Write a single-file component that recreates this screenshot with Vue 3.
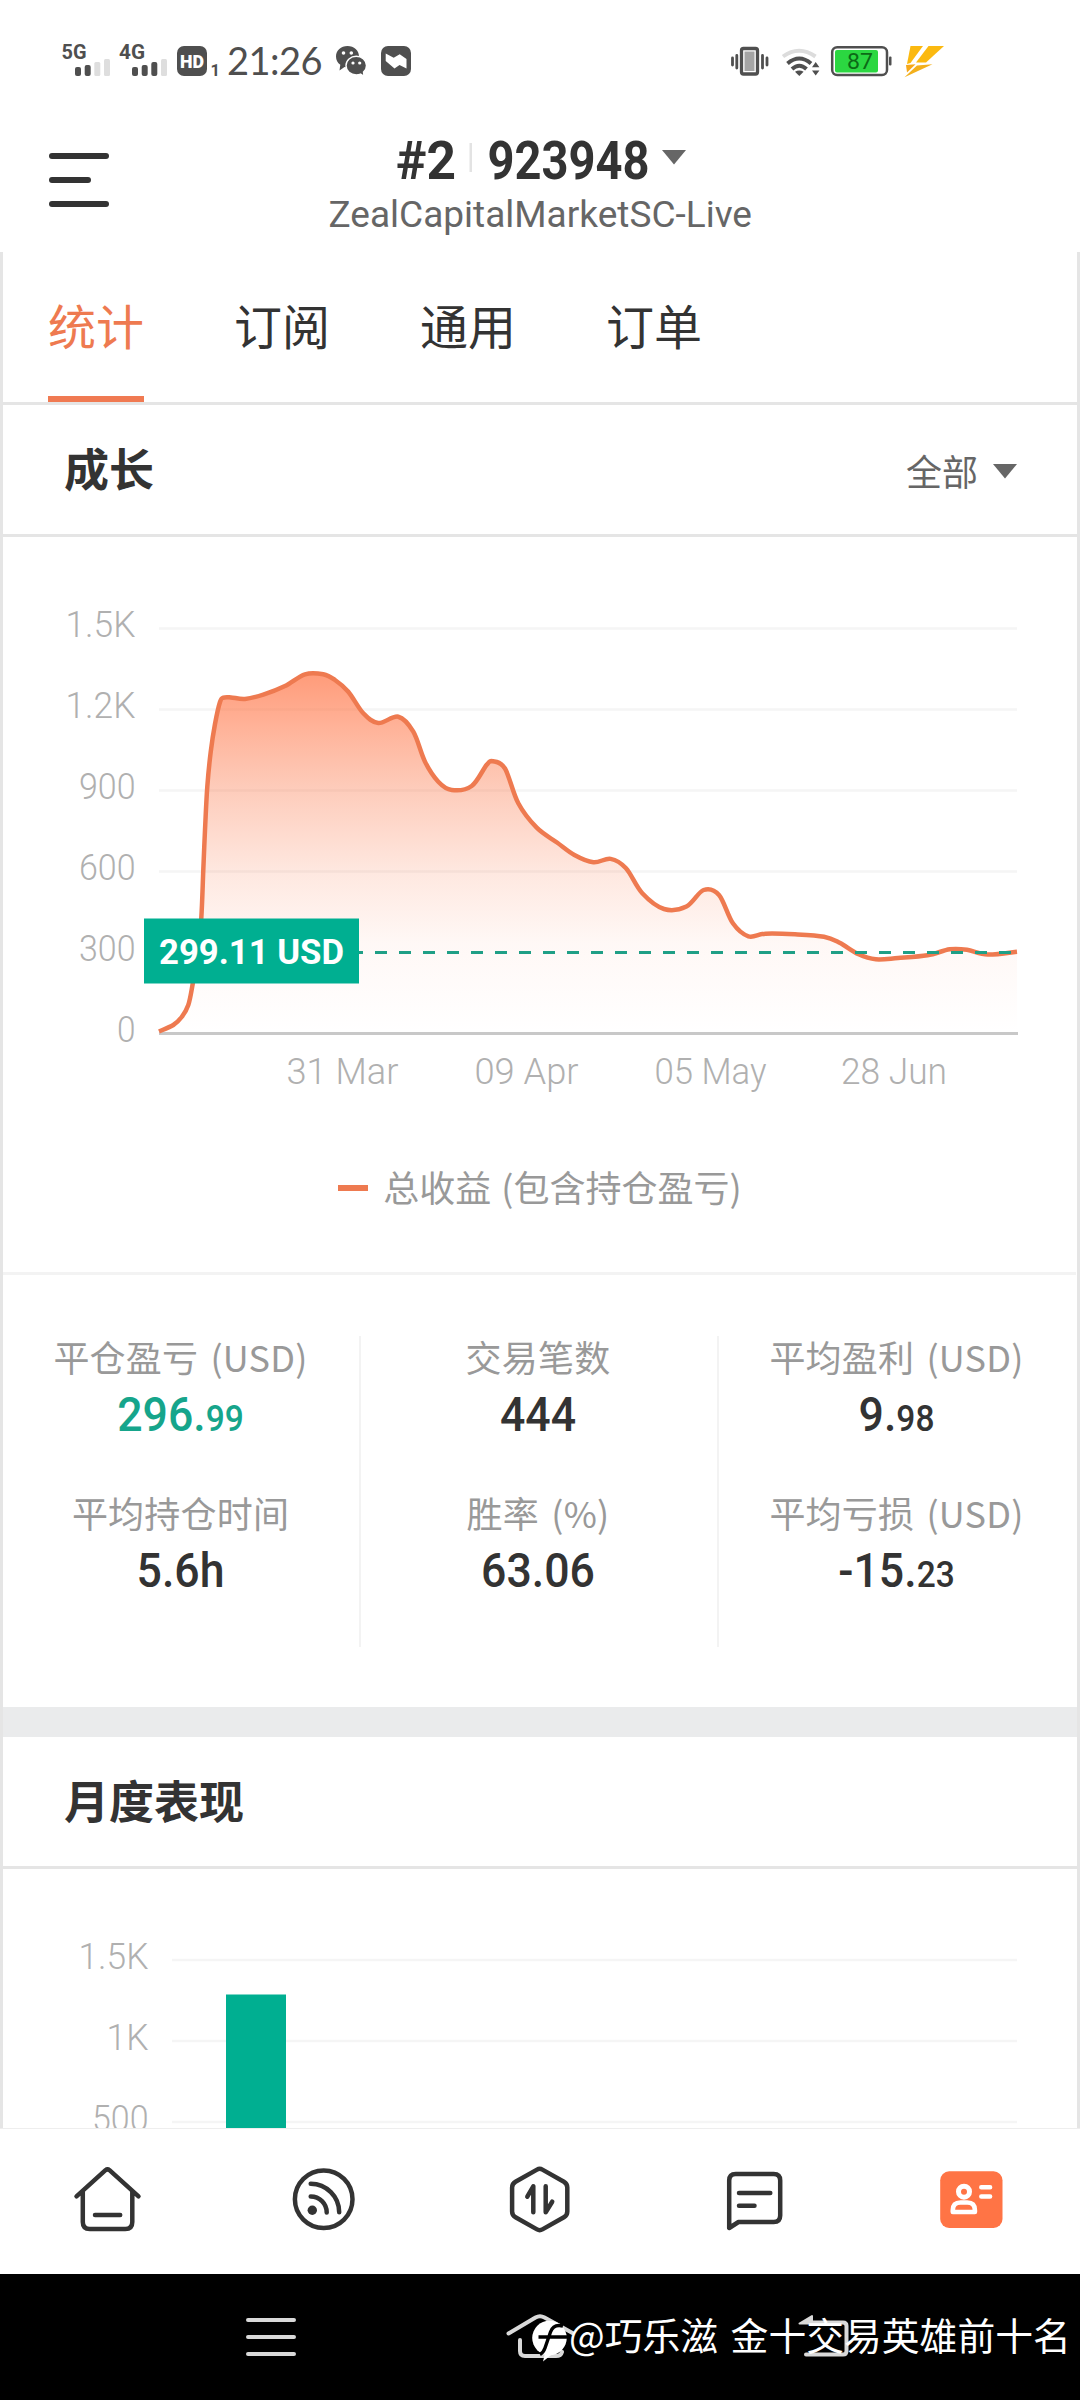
<script setup>
const tabs = ['统计', '订阅', '通用', '订单']

const growthTicks = [
  { label: '1.5K', y: 628.5, w: 70 },
  { label: '1.2K', y: 709.5, w: 70 },
  { label: '900', y: 790.5, w: 56.5 },
  { label: '600', y: 871.5, w: 56.5 },
  { label: '300', y: 952.5, w: 56.5, hidden: true },
  { label: '0', y: 1033.5, w: 18.5, hidden: true }
]
const dates = [
  { label: '31 Mar', x: 342.5, w: 112 },
  { label: '09 Apr', x: 526.5, w: 104 },
  { label: '05 May', x: 710.5, w: 112 },
  { label: '28 Jun', x: 894, w: 106 }
]
const monthTicks = [
  { label: '1.5K', y: 1960, w: 70 },
  { label: '1K', y: 2041, w: 42 },
  { label: '500', y: 2122, w: 56.5 }
]

const points = [
  [159, 1031.5], [173.3, 1025], [181.7, 1017], [188.3, 1005], [192.5, 985], [198, 950], [201.3, 918],
  [203.3, 870], [205, 830], [207.3, 786.7], [210.7, 752], [215, 724], [220, 702], [223.6, 697.6],
  [231, 697.4], [245, 698.9], [263.3, 694.6], [285, 686], [305, 674.3], [323.3, 674.3], [335, 680],
  [348.3, 691.7], [363.3, 713.3], [378.3, 723.1], [398.3, 716.7], [413.3, 731.7], [425, 761.7],
  [438.3, 781.7], [451.7, 790], [471.7, 786], [486.7, 764.8], [493, 761.3], [505, 768.5], [518.3, 803.3],
  [536.7, 827.7], [557, 842.5], [574.4, 855], [593.4, 862.3], [610.6, 858.9], [626, 868.3],
  [642.3, 893.3], [664, 909], [686.4, 906.5], [703.6, 890], [719, 895], [732.9, 923.3],
  [748.4, 936.3], [765.6, 933.7], [795, 934.3], [824, 936.7], [839.6, 942.7], [858.6, 954.3],
  [875.8, 959.3], [898, 958], [927.4, 955.3], [949.8, 949.3], [967, 949.8], [987.7, 954.6], [1017, 951.7]
]

// Catmull-Rom spline converted to cubic segments
function spline(p) {
  let d = `M${p[0][0]} ${p[0][1]}`
  for (let i = 0; i < p.length - 1; i++) {
    const a = p[i - 1] || p[i]
    const b = p[i]
    const c = p[i + 1]
    const e = p[i + 2] || c
    d += `C${b[0] + (c[0] - a[0]) / 6} ${b[1] + (c[1] - a[1]) / 6} ${c[0] - (e[0] - b[0]) / 6} ${c[1] - (e[1] - b[1]) / 6} ${c[0]} ${c[1]}`
  }
  return d
}
const line = spline(points)
const area = `${line}L1017 1033L159 1033Z`

const stats = [
  [
    { label: '平仓盈亏 (USD)', main: '296.', sub: '99', up: true },
    { label: '平均持仓时间', main: '5.6h' }
  ],
  [
    { label: '交易笔数', main: '444' },
    { label: '胜率 (%)', main: '63.06' }
  ],
  [
    { label: '平均盈利 (USD)', main: '9.', sub: '98' },
    { label: '平均亏损 (USD)', main: '-15.', sub: '23' }
  ]
]
</script>

<template>
  <div class="page">
    <div class="status">
      <svg class="signals" width="108" height="40" viewBox="60 40 108 40">
        <g class="net">
          <text x="61.5" y="59" textLength="25" lengthAdjust="spacingAndGlyphs">5G</text>
          <text x="119" y="59" textLength="26" lengthAdjust="spacingAndGlyphs">4G</text>
        </g>
        <g fill="#4f4f4f">
          <rect x="75" y="67" width="6" height="9" rx="2" />
          <rect x="84.7" y="65" width="6" height="11" rx="2" />
          <rect x="132" y="67" width="6" height="9" rx="2" />
          <rect x="141.7" y="65" width="6" height="11" rx="2" />
          <rect x="151.3" y="62" width="6" height="14" rx="2" />
        </g>
        <g fill="#dedede">
          <rect x="94.3" y="62" width="6" height="14" rx="1.5" />
          <rect x="104" y="59" width="6" height="17" rx="1.5" />
          <rect x="161" y="59" width="6" height="17" rx="1.5" />
        </g>
      </svg>
      <svg class="hd" width="44" height="40" viewBox="176 40 44 40">
        <rect x="177" y="46" width="30" height="30" rx="7" fill="#4f4f4f" />
        <text class="hd-text" x="180" y="68.300" textLength="24" lengthAdjust="spacingAndGlyphs">HD</text>
        <text class="hd-num" x="210.500" y="75.500">1</text>
      </svg>
      <span class="time">21:26</span>
      <svg class="wechat" width="32" height="40" viewBox="335 40 32 40">
        <path d="M347.500 46c-6.500 0-11.500 4.500-11.500 10.500 0 3.400 1.600 6.300 4.300 8.300l-.8 5.600 5-3.500c1 .2 2 .3 3 .3 6.400 0 11.500-4.700 11.500-10.700S354 46 347.500 46z" fill="#4f4f4f" />
        <path d="M356.300 56.300c-5.700 0-10.300 4-10.300 9.300s4.600 9.300 10.300 9.300c1.600 0 3-.3 4.300-.8l3.400 2.200-.5-4.200c1.900-1.600 3-3.800 3-6.500 0-5.300-4.600-9.300-10.200-9.300z" fill="#4f4f4f" stroke="#fff" stroke-width="1.400" />
        <g fill="#fff"><circle cx="343.500" cy="53" r="1.800" /><circle cx="351.300" cy="53" r="1.800" /><circle cx="353" cy="63" r="1.600" /><circle cx="359.700" cy="63" r="1.600" /></g>
      </svg>
      <svg class="zig" width="32" height="40" viewBox="380 40 32 40">
        <rect x="381" y="46" width="30" height="30" rx="7" fill="#4f4f4f" />
        <path d="M385.700 53.500l8 4.200 6-3.500 6.800 4.800v9.500l-7-3.500-5 3.500-8.800-7.500z" fill="#fff" />
      </svg>
      <svg class="sys" width="216" height="40" viewBox="728 40 216 40">
        <rect x="741.500" y="48.500" width="16" height="25.500" rx="2" fill="#fff" stroke="#4f4f4f" stroke-width="3.300" />
        <rect x="744.500" y="51.500" width="10" height="19.500" fill="#a5a5a5" />
        <path d="M732.500 58v7M736.800 55.500v12.500M762.500 55.500v12.500M767 58v7" stroke="#4f4f4f" stroke-width="2.800" stroke-linecap="round" />
        <g fill="none" stroke-width="4">
          <path d="M783 56.500Q799 45 815.500 56.500" stroke="#dcdcdc" />
          <path d="M787.500 63.500Q799.300 53.500 811 63.500" stroke="#4f4f4f" />
          <path d="M792 69Q799.300 62.500 806.500 69" stroke="#4f4f4f" />
        </g>
        <path d="M795 71.800q4.300-2.600 8.600 0l-4.300 4.200z" fill="#4f4f4f" />
        <path d="M812 67.300l3.700-5.300 3.700 5.300zM812 70.500h7.400l-3.700 5z" fill="#4f4f4f" />
        <rect x="832.200" y="47.200" width="54.800" height="27.800" rx="5" fill="#fff" stroke="#4f4f4f" stroke-width="2.500" />
        <rect x="835" y="50" width="43" height="22.500" rx="2" fill="#2bd741" />
        <rect x="889" y="56.500" width="2.500" height="9" rx="1" fill="#4f4f4f" />
        <text class="batt" x="847" y="69" textLength="26" lengthAdjust="spacingAndGlyphs">87</text>
        <path d="M910.500 46h12.500l-12.500 17-3.500 1z" fill="#fbb910" />
        <path d="M928.500 46h15.500l-18 16.500h-10z" fill="#fbb910" />
        <path d="M906 65l9.500-.8-8.500 8.300z" fill="#f6a81a" /><path d="M917 65.500l15.500-1.200-28 13z" fill="#f3b01c" />
      </svg>
    </div>

    <div class="header">
      <div class="menu"><i></i><i class="short"></i><i></i></div>
      <div class="account">
        <svg width="430" height="112" viewBox="325 130 430 112">
          <text class="acc" x="396" y="178.500" textLength="60" lengthAdjust="spacingAndGlyphs">#2</text>
          <rect x="469.500" y="143" width="2.500" height="29" fill="#e3e3e3" />
          <text class="acc" x="487.500" y="178.500" textLength="162" lengthAdjust="spacingAndGlyphs">923948</text>
          <path d="M662 150h24l-12 14.500z" fill="#666" />
          <text class="server" x="328.500" y="227.300" textLength="423.500" lengthAdjust="spacingAndGlyphs">ZealCapitalMarketSC-Live</text>
        </svg>
      </div>
    </div>

    <div class="content">
      <div class="tabs">
        <div v-for="(t, i) in tabs" :key="t" class="tab" :class="{ active: i === 0 }">{{ t }}</div>
      </div>
      <div class="section-head">
        <h2>成长</h2>
        <div class="filter">全部<svg width="24" height="15" viewBox="0 0 24 15"><path d="M0 0h24L12 14.500z" fill="#666" /></svg></div>
      </div>
      <svg class="chart" width="1074" height="593" viewBox="3 537 1074 593">
        <defs>
          <linearGradient id="growth" gradientUnits="userSpaceOnUse" x1="0" y1="673" x2="0" y2="1033">
            <stop offset="0" stop-color="#ff7445" stop-opacity=".72" />
            <stop offset=".15" stop-color="#ff7445" stop-opacity=".55" />
            <stop offset=".32" stop-color="#fb7445" stop-opacity=".37" />
            <stop offset=".55" stop-color="#fb7445" stop-opacity=".17" />
            <stop offset=".75" stop-color="#fb7445" stop-opacity=".05" />
            <stop offset="1" stop-color="#fb7445" stop-opacity="0" />
          </linearGradient>
        </defs>
        <template v-for="t in growthTicks" :key="t.label">
          <line v-if="!t.hidden" x1="159" x2="1017" :y1="t.y" :y2="t.y" class="grid" />
          <text class="tick" :x="135.5 - t.w" :y="t.y + 8.500" :textLength="t.w" lengthAdjust="spacingAndGlyphs">{{ t.label }}</text>
        </template>
        <line x1="159" x2="1018" y1="1033.500" y2="1033.500" stroke="#c8c8c8" stroke-width="3" />
        <path :d="area" fill="url(#growth)" />
        <path :d="line" fill="none" stroke="#ee7a50" stroke-width="4.500" stroke-linejoin="round" />
        <line x1="351" x2="1017" y1="952.500" y2="952.500" stroke="#1f9f86" stroke-width="3" stroke-dasharray="12 12" />
        <rect x="144" y="918.500" width="215" height="65" fill="#00af91" />
        <text class="tag" x="159" y="964" textLength="185" lengthAdjust="spacingAndGlyphs">299.11 USD</text>
        <text v-for="d in dates" :key="d.label" class="tick" :x="d.x - d.w / 2" y="1083.500" :textLength="d.w" lengthAdjust="spacingAndGlyphs">{{ d.label }}</text>
      </svg>
      <div class="legend"><i></i><span>总收益 (包含持仓盈亏)</span></div>
      <div class="stats">
        <div v-for="(col, i) in stats" :key="i" class="col">
          <div v-for="s in col" :key="s.label">
            <div class="label">{{ s.label }}</div>
            <div class="value" :class="{ up: s.up }">{{ s.main }}<small v-if="s.sub">{{ s.sub }}</small></div>
          </div>
        </div>
      </div>
      <div class="band"></div>
      <div class="section-head"><h2>月度表现</h2></div>
      <svg class="chart" width="1074" height="300" viewBox="3 1869 1074 300">
        <template v-for="t in monthTicks" :key="t.label">
          <line x1="172" x2="1017" :y1="t.y" :y2="t.y" class="grid" />
          <text class="tick" :x="148.5 - t.w" :y="t.y + 9" :textLength="t.w" lengthAdjust="spacingAndGlyphs">{{ t.label }}</text>
        </template>
        <rect x="226" y="1994.500" width="60" height="174" fill="#00af91" />
      </svg>
    </div>

    <div class="nav">
      <div class="nav-item">
        <svg viewBox="0 0 80 80"><path d="M8.500 36.300L37.500 10.200q2-1.700 4 0L70.500 36.300M14.800 31v31q0 7 7 7h35.500q7 0 7-7v-31M27 55h25.200" /></svg>
      </div>
      <div class="nav-item">
        <svg viewBox="0 0 80 80"><circle cx="39.700" cy="39.200" r="28.800" /><path d="M26.700 36.500a16 16 0 0 1 16 16M26.700 23.700A28.600 28.600 0 0 1 55.200 52.300" /><circle cx="28.300" cy="50.300" r="4.700" fill="#333" stroke="none" /></svg>
      </div>
      <div class="nav-item">
        <svg viewBox="0 0 80 80"><path d="M37 9.600q2.700-1.500 5.400 0l21.500 12.200q3.400 2 3.400 5.800v23.800q0 3.800-3.400 5.800L42.400 69.400q-2.700 1.500-5.400 0L15.500 57.200q-3.400-2-3.400-5.800V27.600q0-3.800 3.400-5.800zM27.300 36.700l6-10.400v26M45.700 26.300v26l6.500-10.600" /></svg>
      </div>
      <div class="nav-item">
        <svg viewBox="1 0 80 80"><path d="M14.200 68V20.500q0-6.500 6.500-6.500h38q6.500 0 6.500 6.500v35q0 6.500-6.500 6.500H23.500zM24 33h31.300M24 45.700h15.500" /></svg>
      </div>
      <div class="nav-item">
        <svg viewBox="0 0 80 80"><rect x="8.200" y="11.300" width="62.300" height="56.700" rx="9" fill="#ff7445" stroke="none" /><g stroke="#fff"><circle cx="32" cy="31.700" r="5.500" stroke-width="5" /><path d="M20.800 52v-1.800q0-7.700 7.700-7.700h6.700q7.700 0 7.700 7.700V52z" stroke-width="4.600" /><path d="M49.300 27.200h8.800M49.300 36.400h8.800" /></g></svg>
      </div>
    </div>

    <div class="sysbar">
      <svg width="1080" height="126" viewBox="0 2274 1080 126" fill="none" stroke="#d9d9d9" stroke-width="4" stroke-linecap="round" stroke-linejoin="round">
        <path d="M248 2320h46M248 2337h46M248 2354h46" />
        <path d="M508.500 2333.500l27-16q4.500-2.500 9 0l28 15.500M520 2340v11q0 5 5 5h31q5 0 6-4" />
        <path d="M806 2354.500h37q3.500 0 3.500-3.500v-25q0-3.500-3.500-3.500h-33" />
        <path d="M799.500 2323.500l12.500-7.500v7.500z" fill="#d9d9d9" stroke-width="2" />
        <circle cx="549.500" cy="2338" r="17.300" fill="#fff" stroke="none" />
        <path d="M543 2361.500l2.500-10h10z" fill="#fff" stroke="none" />
        <path d="M563 2326q-9.500-2.500-12.500 6l-5.500 16q-1.500 4.500-5 6.500M538.500 2337h29" stroke="#000" stroke-width="3.400" stroke-linecap="butt" />
      </svg>
      <div class="watermark">@巧乐滋 金十交易英雄前十名</div>
    </div>
  </div>
</template>

<style>
body { margin: 0; background: #fff; }
</style>

<style scoped>
.page {
  width: 1080px;
  height: 2400px;
  display: flex;
  flex-direction: column;
  overflow: hidden;
  background: #fff;
  color: #333;
  font-family: "Noto Sans CJK SC", sans-serif;
}
svg { display: block; flex: none; }
svg text { font-family: Roboto, sans-serif; }

.status { height: 40px; padding: 40px 0 0 60px; display: flex; align-items: center; flex: none; }
.net { font-size: 20.500px; font-weight: 700; fill: #4f4f4f; }
.hd { margin-left: 8px; }
.hd-text { font-size: 19px; font-weight: 900; fill: #fff; }
.hd-num { font-size: 16.500px; font-weight: 700; fill: #4f4f4f; }
.time { margin-left: 7px; width: 100px; font: 400 38px/40px Lato, sans-serif; color: #4f4f4f; letter-spacing: -.5px; }
.wechat { margin-left: 8px; }
.zig { margin-left: 13px; }
.sys { margin-left: 316px; }
.batt { font-size: 22px; fill: #0c6a16; }

.header { height: 172px; display: flex; flex: none; }
.menu { width: 276px; padding: 73px 0 0 49px; display: flex; flex-direction: column; gap: 18px; }
.menu i { width: 60px; height: 6px; border-radius: 3px; background: #333; }
.menu .short { width: 42px; }
.account { padding-top: 50px; }
.acc { font-size: 53.500px; font-weight: 700; fill: #333; }
.server { font-size: 36.500px; fill: #666; }

.content { flex: 1; min-height: 0; overflow: hidden; border: solid #e5e5e5; border-width: 0 3px; }
.tabs { height: 150px; padding-left: 45px; display: flex; gap: 90px; border-bottom: 3px solid #e5e5e5; }
.tab { height: 144px; font-size: 48px; line-height: 144px; border-bottom: 6px solid transparent; box-sizing: content-box; }
.tab.active { color: #ee7a50; border-color: #f07a52; }
.section-head { height: 129px; padding: 0 60px; display: flex; align-items: center; justify-content: space-between; border-bottom: 3px solid #e5e5e5; }
h2 { margin: 0 0 4px 1px; font-size: 45px; line-height: 60px; font-weight: 700; }
.filter { display: flex; align-items: center; gap: 15px; font-size: 36px; line-height: 54px; color: #666; }
.filter svg { margin-top: 4px; }
.grid { stroke: #f5f5f5; stroke-width: 2.500; }
.tick { font-size: 36px; font-weight: 300; fill: #b0b0b0; }
.tag { font-size: 35.500px; font-weight: 700; fill: #fff; }
.legend { height: 142px; box-sizing: border-box; padding-bottom: 28px; display: flex; align-items: center; justify-content: center; gap: 15px; font-size: 36px; color: #999; word-spacing: 2px; }
.legend span { margin-bottom: 3px; }
.legend i { width: 30px; height: 6px; background: #ee7a50; margin-top: 2px; }
.stats { height: 311px; width: 1074px; margin-left: -1px; padding: 61px 0 60px; border-top: 3px solid #f3f3f3; display: grid; grid-template-columns: 357px 358px 359px; text-align: center; }
.col { display: flex; flex-direction: column; gap: 50px; }
.col + .col { box-shadow: inset 2px 0 #f3f3f3; }
.label { font-size: 36px; line-height: 44px; height: 44px; color: #999; white-space: nowrap; word-spacing: 4px; letter-spacing: .2px; margin-top: -2px; }
.value { margin-top: 9px; height: 55px; font: 500 48px/56px Roboto, sans-serif; transform: scaleX(.93); }
.value small { font-size: 36px; }
.value.up { color: #16a58b; }
.band { height: 30px; background: #eaebec; }

.nav { height: 145px; border-top: 1px solid #eee; display: flex; flex: none; }
.nav-item { flex: 1; display: flex; justify-content: center; padding-top: 31px; }
.nav-item svg { width: 80px; height: 80px; fill: none; stroke: #333; stroke-width: 4.500; stroke-linecap: round; stroke-linejoin: round; }
.sysbar { height: 126px; background: #000; position: relative; flex: none; }
.watermark { position: absolute; left: 569px; top: 33px; font-size: 37.800px; line-height: 54px; word-spacing: 4px; color: #fff; white-space: nowrap; }
</style>
